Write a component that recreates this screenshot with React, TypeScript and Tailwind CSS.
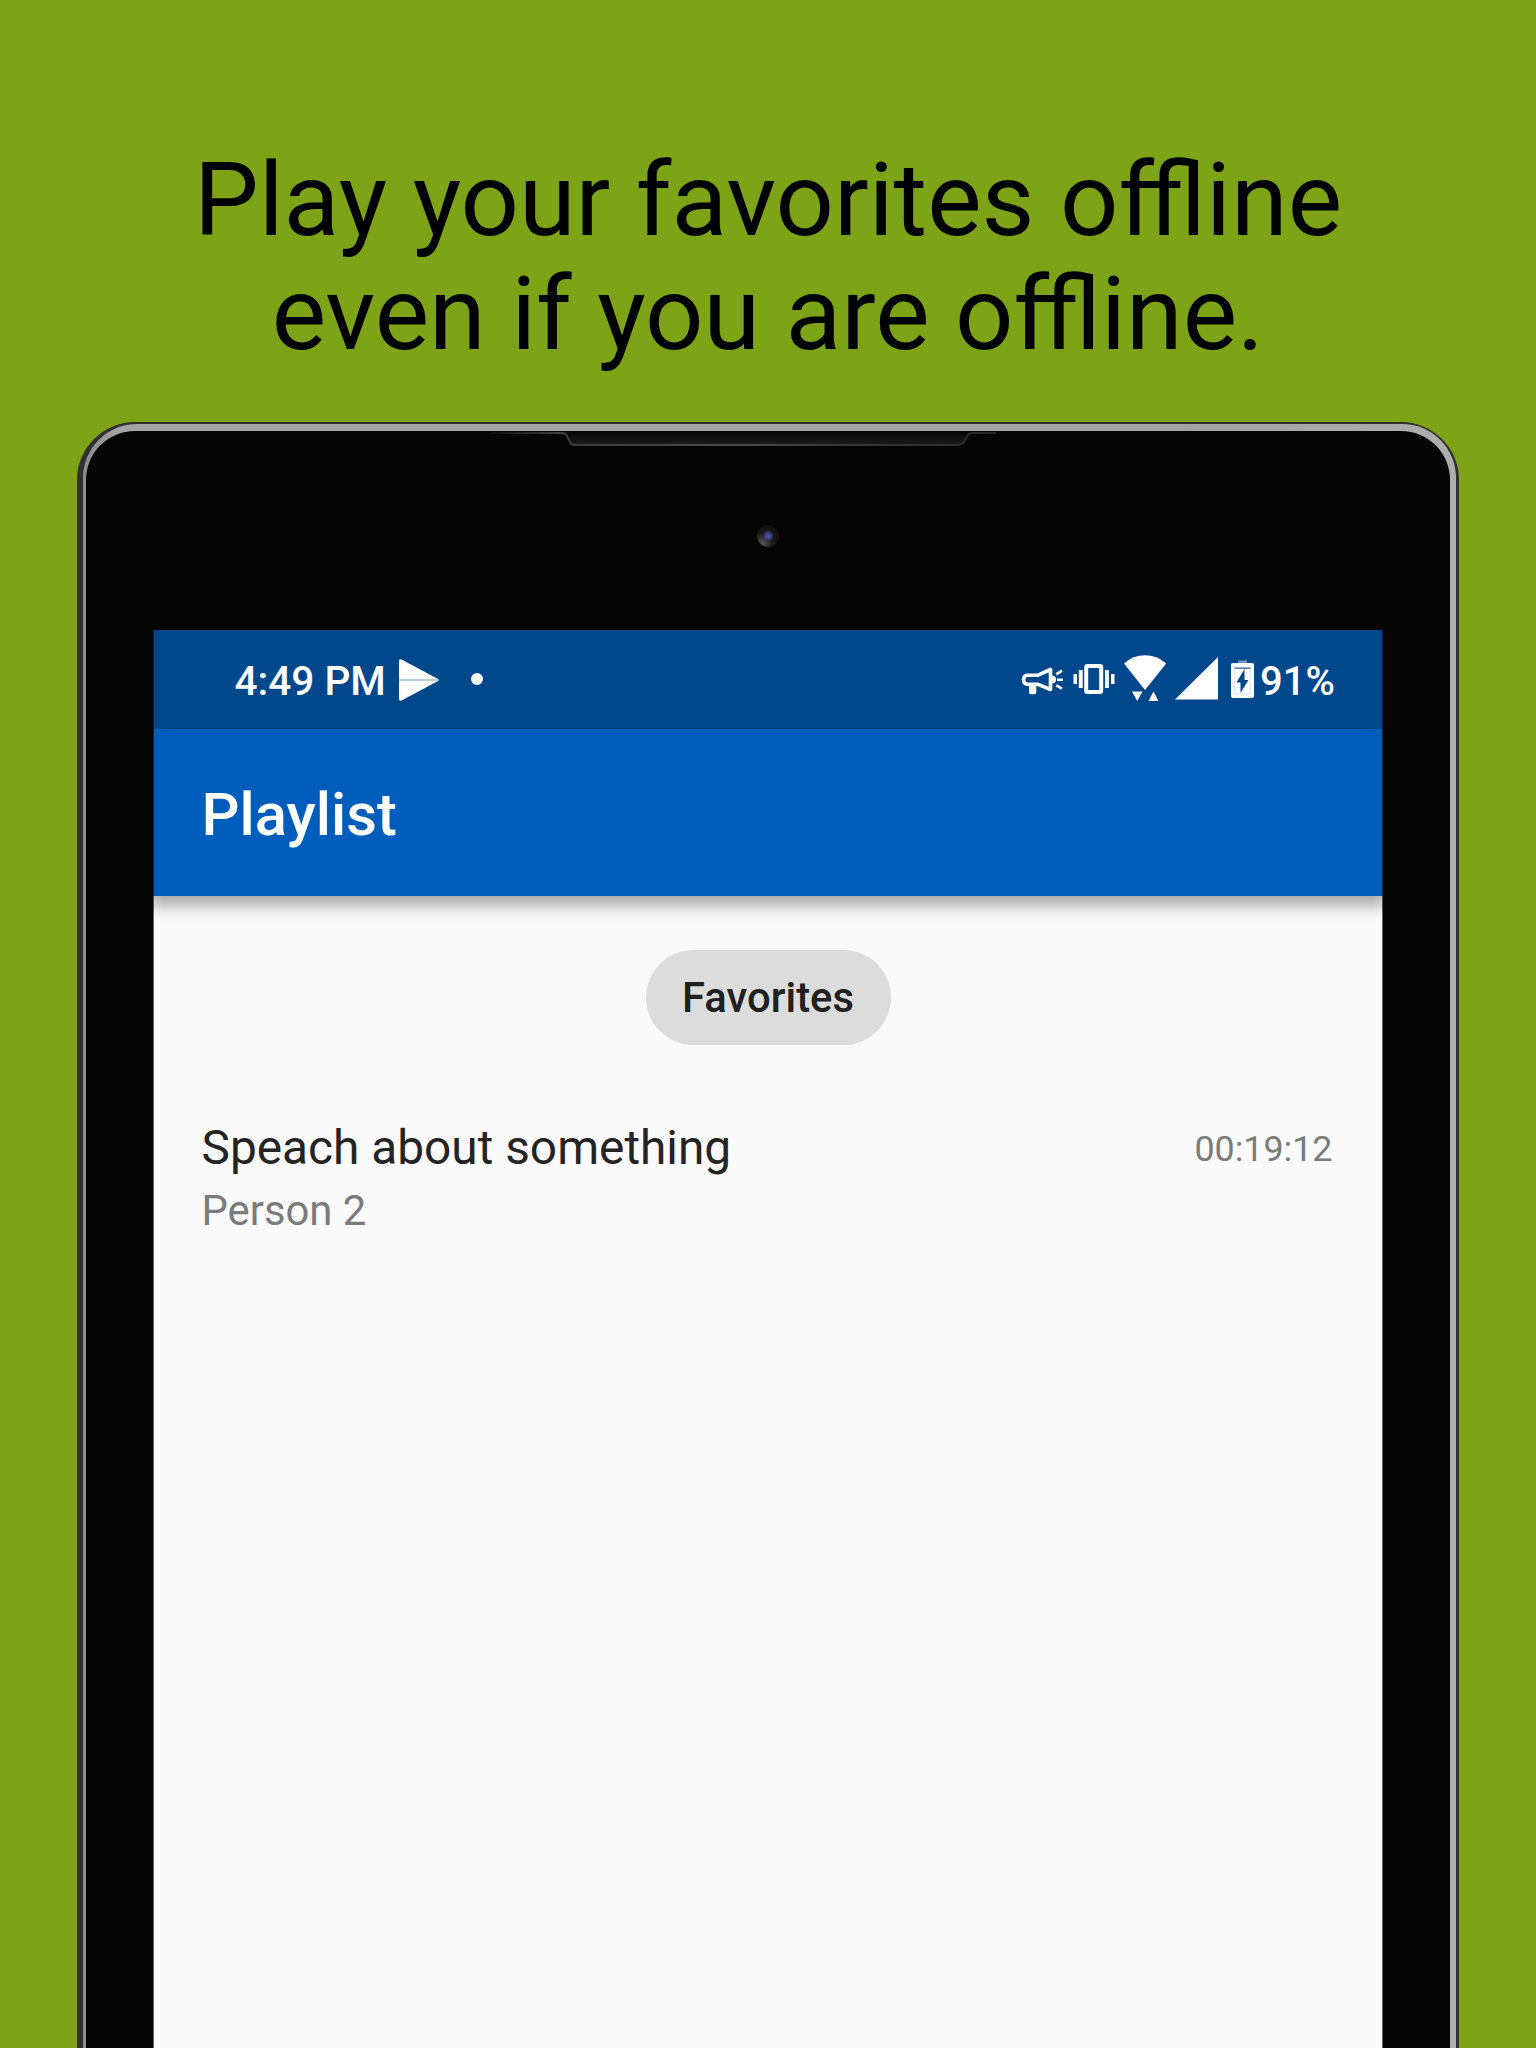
function MegaphoneIcon() {
  return (
    <svg className="absolute left-[1021px] top-[664px] h-[34px] w-[44px]" viewBox="0 0 44 34" fill="none" stroke="#fff" strokeWidth="3.600">
      <path d="M6 11.200h11L29.500 5.500v20L17 20.300H6a4 4.600 0 0 1 0-9.100Z" strokeLinejoin="round" />
      <path d="M9.800 21v7.500h3.700V21" strokeLinejoin="round" />
      <path d="M31 11.500a4 4 0 0 1 0 8" fill="#fff" stroke="none" />
      <path d="m35.300 10.300 5.700-3.600M36 15.800h6M35.300 21.300l5.700 3.400" strokeWidth="2.600" />
    </svg>
  );
}

function VibrateIcon() {
  return (
    <svg className="absolute left-[1073px] top-[663px] h-[32px] w-[43px]" viewBox="0 0 43 32" fill="#fff">
      <rect x="0.500" y="11" width="3.500" height="10" />
      <rect x="5.800" y="7" width="3.900" height="18" />
      <rect x="13.200" y="3" width="15" height="26" rx="1" fill="none" stroke="#fff" strokeWidth="4" />
      <rect x="32" y="7" width="3.900" height="18" />
      <rect x="38" y="11" width="3.500" height="10" />
    </svg>
  );
}

function WifiIcon() {
  return (
    <svg className="absolute left-[1123px] top-[654px] h-[48px] w-[44px]" viewBox="0 0 44 48" fill="#fff">
      <path d="M1 9.500Q10 1.200 22 1.200T43.200 9.500L22 36Z" />
      <path d="M9 37.500h10.500L14.300 47ZM25.500 47l5-9.500 5 9.500Z" />
    </svg>
  );
}

function BatteryIcon() {
  return (
    <svg className="absolute left-[1230px] top-[660px] h-[39px] w-[25px]" viewBox="0 0 25 39">
      <rect x="8" y="0.500" width="9" height="3" fill="#7397bb" />
      <rect x="1" y="3" width="23" height="35" rx="2" fill="#fff" />
      <path d="M4.500 8.200h16" stroke="#4c79a8" strokeWidth="1.500" />
      <path d="M4.500 9v25h16V9" fill="none" stroke="#dde7f1" strokeWidth="1" />
      <path d="M14.500 9v11h4L10.500 33V22.500h-4Z" fill="#00468a" />
    </svg>
  );
}

function StatusBar() {
  return (
    <div className="flex h-[98.500px] items-center justify-between bg-[#00478b] pl-[81.500px] pr-[48px] text-[40.600px] font-medium leading-[48px] text-white">
      <div className="flex items-center pt-[4px]">
        <span>4:49 PM</span>
        <svg className="ml-[12.500px] mb-[3px] h-[44px] w-[42px]" viewBox="0 0 42 44" fill="#fff">
          <path d="M3.500 1.500 41 21.500H1V3Q1 .5 3.500 1.500ZM1 22.500h40L3.500 42.500Q1 43.500 1 41Z" />
          <path d="M1 22h40" stroke="#d0dce8" strokeWidth="1.500" />
        </svg>
        <span className="ml-[31px] mb-[4px] size-3 rounded-full bg-white" />
      </div>
      <span className="pt-[5px] text-[40px]">91%</span>
    </div>
  );
}

export default function App() {
  return (
    <div className="relative flex h-[2048px] w-[1536px] flex-col items-center overflow-hidden bg-[#7da317] font-['Roboto',sans-serif]">
      <h1 className="h-[422px] shrink-0 pt-[143px] text-center text-[102.600px] leading-[114.400px] text-black">
        Play your favorites offline
        <br />
        even if you are offline.
      </h1>

      <div className="h-[1720px] w-[1382px] shrink-0 rounded-t-[58px] bg-[#303030] pl-[6px] pr-[3px] pt-[2px]">
        <div className="h-full rounded-t-[54px] bg-[linear-gradient(90deg,#8c8c8c,#a4a4a4_3%,#a4a4a4_80%,#adadad)] pl-[3px] pr-[6px] pt-[7px]">
          <div className="h-full rounded-t-[49px] bg-[#050505] pl-[67px] pr-[67px] pt-[199px]">
            <div className="relative h-[1500px] bg-[#fafafa] after:absolute after:inset-0 after:border-x after:border-black/60">
              <StatusBar />
              <header className="flex h-[167px] items-center bg-[#005dbb] pl-[48.500px] pt-[7px] text-[59.700px] font-medium text-white shadow-[0_6px_14px_4px_rgba(0,0,0,0.32)] [clip-path:inset(0_0_-30px_0)]">
                Playlist
              </header>
              <main className="flex flex-col">
                <button className="mt-[54px] h-[95px] w-[245px] self-center rounded-full bg-[#dcdcdc] pt-[2px] text-[41.800px] font-medium text-[#202020]">
                  Favorites
                </button>
                <div className="mt-[74px] flex justify-between pl-[48.500px] pr-[50.500px]">
                  <div>
                    <p className="text-[47.800px] leading-[58px] text-[#242424]">Speach about something</p>
                    <p className="mt-[6px] text-[41.800px] leading-[56px] text-[#7b7b7b]">Person 2</p>
                  </div>
                  <p className="pt-px text-[35.800px] leading-[58px] text-[#7b7b7b]">00:19:12</p>
                </div>
              </main>
            </div>
          </div>
        </div>
      </div>

      <MegaphoneIcon />
      <VibrateIcon />
      <WifiIcon />
      <svg className="absolute left-[1175px] top-[657px] h-[43px] w-[44px]" viewBox="0 0 44 43" fill="#fff">
        <path d="M0 42.500 43 0v42.500Z" />
      </svg>
      <BatteryIcon />

      <svg className="absolute left-[480px] top-[431px] h-[18px] w-[520px]" viewBox="0 0 520 18" fill="none">
        <defs>
          <linearGradient id="rim" gradientUnits="userSpaceOnUse" x1="0" y1="0" x2="520" y2="0">
            <stop offset="0" stopColor="#3c3c3c" stopOpacity="0" />
            <stop offset="0.15" stopColor="#3c3c3c" />
            <stop offset="0.5" stopColor="#484848" />
            <stop offset="0.85" stopColor="#303030" />
            <stop offset="1" stopColor="#262626" />
          </linearGradient>
          <linearGradient id="slot" x1="0" y1="0" x2="0" y2="1">
            <stop offset="0" stopColor="#080808" />
            <stop offset="1" stopColor="#1c1c1c" />
          </linearGradient>
        </defs>
        <path d="M85 2 93 14H481L489 2Z" fill="url(#slot)" />
        <path d="M10 2H82Q85 2 86.500 4L90 11Q91.500 14 95 14H478Q482 14 484 11L488 4Q489 2 492 2H516" stroke="url(#rim)" strokeWidth="2" />
      </svg>
      <div className="absolute left-[757px] top-[525px] flex size-[22px] items-center justify-center rounded-full bg-[radial-gradient(circle_at_25%_85%,#555,#1b1b1b_40%,#0e0e0e_75%)]">
        <span className="size-[10px] rounded-full bg-[radial-gradient(circle,#5560a0,#282f62_65%,#15182c)]" />
      </div>
    </div>
  );
}
